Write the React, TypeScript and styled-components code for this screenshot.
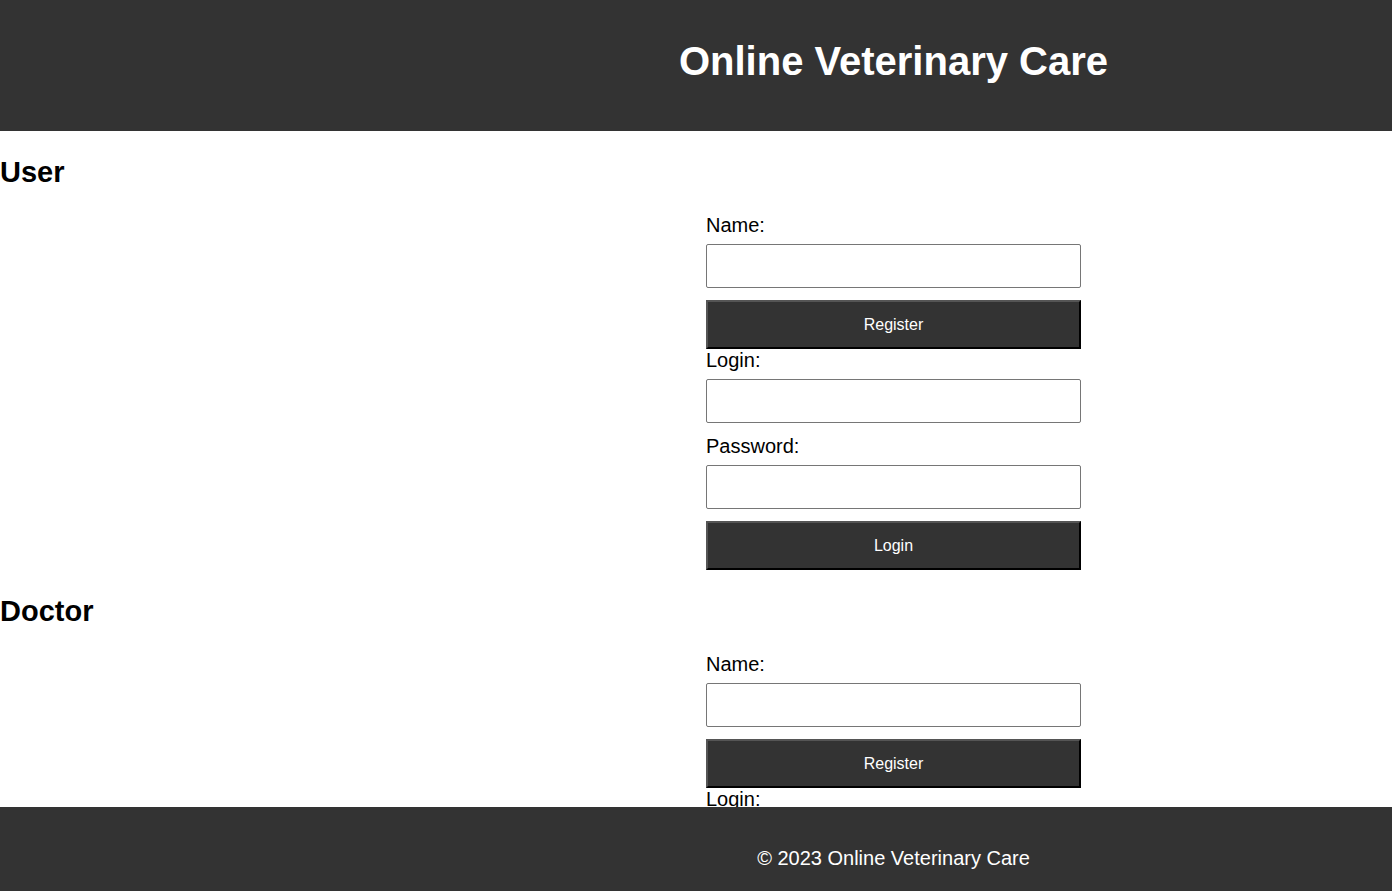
import styled, { createGlobalStyle } from 'styled-components'

// the reference content is centred on x≈893, not on the viewport middle
const SHIFT = '395px'

const GlobalStyle = createGlobalStyle`
  html, body {
    margin: 0;
    padding: 0;
    background: #ffffff;
    color: #000000;
    font-family: "Liberation Sans", Arial, sans-serif;
  }
`

const Cabecera = styled.header`
  background-color: #333333;
  color: #ffffff;
  padding: 39px 0 47px ${SHIFT};
  text-align: center;
`

const Titulo = styled.h1`
  margin: 0;
  font-size: 40px;
  font-weight: bold;
  line-height: normal;
`

const Seccion = styled.section`
  display: flex;
  flex-direction: column;
`

const TituloSeccion = styled.h2`
  margin: 25px 0 0;
  font-size: 29px;
  font-weight: bold;
  line-height: normal;
`

const Formulario = styled.form`
  display: flex;
  flex-direction: column;
  align-self: stretch;
  align-items: center;
  padding-left: ${SHIFT};
  margin-top: 25px;
`

const Columna = styled.div`
  display: flex;
  flex-direction: column;
  width: 375px;
`

const Etiqueta = styled.label`
  display: block;
  font-size: 20px;
  line-height: 23px;
`

const Campo = styled.input`
  box-sizing: border-box;
  width: 100%;
  height: 44px;
  margin: 6.5px 0 12.5px;
  border: 1px solid #767676;
  border-radius: 2px;
  background: #ffffff;
  font-size: 16px;
  padding: 0 8px;
  font-family: inherit;
`

const Boton = styled.button`
  box-sizing: border-box;
  width: 100%;
  height: 49px;
  background-color: #333333;
  color: #ffffff;
  font-family: "Liberation Sans", Arial, sans-serif;
  font-size: 16px;
  border-style: solid;
  border-width: 2px;
  border-color: #555555 #000000 #000000 #555555;
  cursor: pointer;
  padding: 0;
`

const Pie = styled.footer`
  position: fixed;
  left: 0;
  right: 0;
  bottom: 0;
  height: 84px;
  box-sizing: border-box;
  background-color: #333333;
  color: #ffffff;
  padding: 40px 0 0 ${SHIFT};
  text-align: center;
  font-size: 20px;
  line-height: 23px;
`

const Espacio = styled.div`
  height: 100px;
`

const Acceso = ({ rol }: { rol: string }) => (
  <Seccion>
    <TituloSeccion>{rol}</TituloSeccion>
    <Formulario onSubmit={e => e.preventDefault()}>
      <Columna>
        <Etiqueta htmlFor={`${rol}-name`}>Name:</Etiqueta>
        <Campo id={`${rol}-name`} type="text" />
        <Boton type="button">Register</Boton>
        <Etiqueta htmlFor={`${rol}-login`}>Login:</Etiqueta>
        <Campo id={`${rol}-login`} type="text" />
        <Etiqueta htmlFor={`${rol}-pass`}>Password:</Etiqueta>
        <Campo id={`${rol}-pass`} type="password" />
        <Boton type="submit">Login</Boton>
      </Columna>
    </Formulario>
  </Seccion>
)

export default function App() {
  return (
    <>
      <GlobalStyle />
      <Cabecera>
        <Titulo>Online Veterinary Care</Titulo>
      </Cabecera>
      <main>
        <Acceso rol="User" />
        <Acceso rol="Doctor" />
        <Espacio />
      </main>
      <Pie>© 2023 Online Veterinary Care</Pie>
    </>
  )
}
